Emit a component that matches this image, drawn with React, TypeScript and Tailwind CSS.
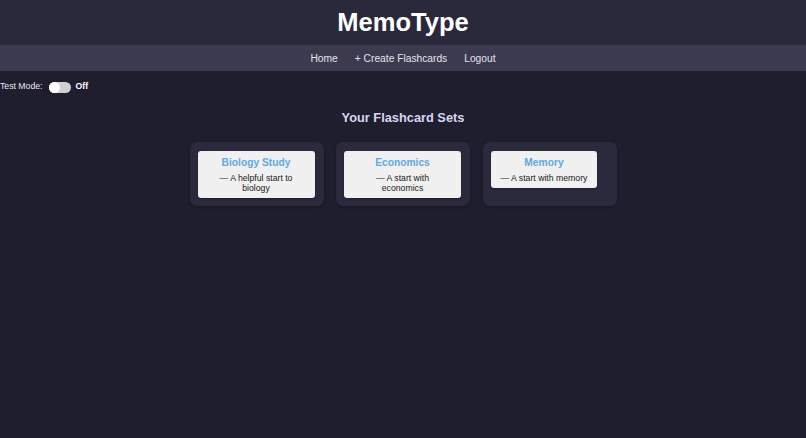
import React from "react";

const sets = [
  { title: "Biology Study", desc: "— A helpful start to biology" },
  { title: "Economics", desc: "— A start with economics" },
  { title: "Memory", desc: "— A start with memory" },
];

export default function App() {
  return (
    <div
      className="min-h-[438px] w-full bg-[#1f1e2e]"
      style={{ fontFamily: '"Liberation Sans", Arial, sans-serif' }}
    >
      <header className="h-[45px] bg-[#2a293c] flex items-center justify-center">
        <h1 className="text-[25.5px] leading-none font-bold text-white">MemoType</h1>
      </header>
      <nav className="h-[26px] pt-[1px] bg-[#3b3a4f] flex items-center justify-center gap-[17px] text-[10.24px] text-[#e4e4ee]">
        <a>Home</a>
        <a>+ Create Flashcards</a>
        <a>Logout</a>
      </nav>
      <div className="h-[30px] pt-[2px] flex items-center text-[8.7px] text-[#e8e8ee]">
        <span>Test Mode:</span>
        <span className="ml-[6px] w-[22px] h-[11px] rounded-full bg-[#cfcfd2] flex items-center">
          <span className="w-[11px] h-[11px] rounded-full bg-white" />
        </span>
        <span className="ml-[5px] font-bold text-white">Off</span>
      </div>
      <h2 className="mt-[9px] text-center text-[12.8px] leading-[15px] font-bold text-[#d6d6f2]">
        Your Flashcard Sets
      </h2>
      <div className="mt-[17px] flex justify-center gap-[12.5px]">
        {sets.map((s) => (
          <div
            key={s.title}
            className="w-[134px] bg-[#2b2a3d] rounded-[7px] pl-[8px] pr-[9px] pt-[9px] pb-[8px] flex flex-col items-start shadow-[0_1px_3px_rgba(0,0,0,0.3)]"
          >
            <div className="max-w-[117px] bg-[#f0f0f0] rounded-[3px] px-[10px] pt-[6px] pb-[5px] text-center shadow-[0_1px_2px_rgba(0,0,0,0.3)]">
              <div className="text-[10.24px] leading-[12px] font-bold text-[#5fa9e2]">{s.title}</div>
              <div className="mt-[4px] text-[8.7px] leading-[10px] text-[#1a1a1a]">{s.desc}</div>
            </div>
          </div>
        ))}
      </div>
    </div>
  );
}
